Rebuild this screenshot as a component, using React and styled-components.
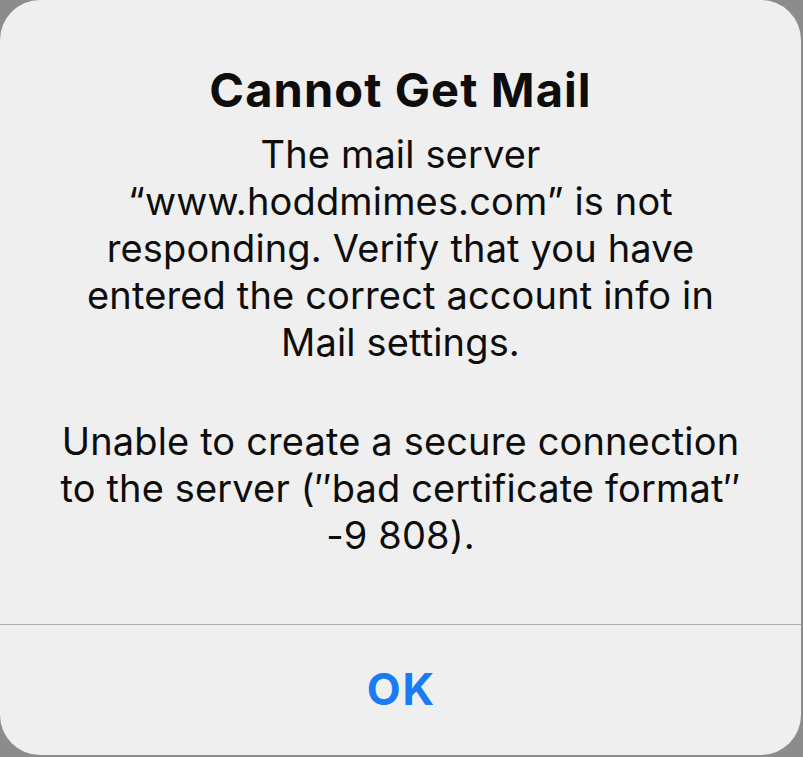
import React from "react";
import styled, { createGlobalStyle } from "styled-components";

const Global = createGlobalStyle`
  html, body { margin: 0; padding: 0; }
  body {
    background: #8c8c8c;
    font-family: Inter, "Noto Sans", "Liberation Sans", sans-serif;
    -webkit-font-smoothing: antialiased;
  }
`;

const Screen = styled.div`
  width: 803px;
  height: 757px;
  display: flex;
  align-items: flex-start;
`;

const Card = styled.div`
  width: 801px;
  height: 755px;
  background: #efefef;
  border-radius: 40px;
  display: flex;
  flex-direction: column;
  overflow: hidden;
`;

const Content = styled.div`
  flex: 1;
  display: flex;
  flex-direction: column;
  align-items: center;
  padding: 62px 20px 0;
  text-align: center;
  color: #0d0d0d;
`;

const Title = styled.h1`
  margin: 0 0 13px;
  font-size: 47px;
  line-height: 56px;
  font-weight: 700;
  letter-spacing: 1.1px;
`;

const Message = styled.p`
  margin: 0 0 ${(p) => p.$gap}px;
  font-size: 38px;
  line-height: 47px;
  font-weight: 400;
  letter-spacing: 0.15px;
  white-space: pre;
`;

const Separator = styled.div`
  height: 1px;
  background: #adadad;
`;

const Button = styled.button`
  height: 130px;
  border: none;
  background: transparent;
  color: #1a7cf4;
  font-family: inherit;
  font-size: 44px;
  font-weight: 700;
  letter-spacing: 2px;
  padding: 0 0 2px 2px;
  cursor: pointer;
`;

export default function App() {
  return (
    <>
      <Global />
      <Screen>
        <Card>
          <Content>
            <Title>Cannot Get Mail</Title>
            <Message $gap={52}>
              {"The mail server\n\u201Cwww.hoddmimes.com\u201D is not\nresponding. Verify that you have\nentered the correct account info in\nMail settings."}
            </Message>
            <Message $gap={0}>
              {"Unable to create a secure connection\nto the server (\u2033bad certificate format\u2033\n-9\u00A0808)."}
            </Message>
          </Content>
          <Separator />
          <Button>OK</Button>
        </Card>
      </Screen>
    </>
  );
}
